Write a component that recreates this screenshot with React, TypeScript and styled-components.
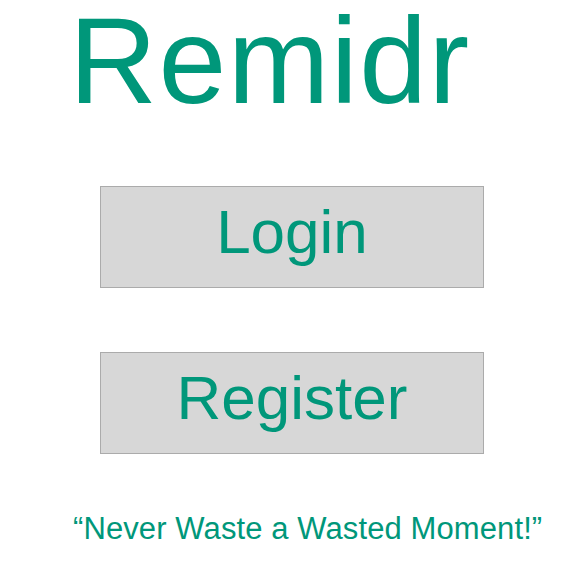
import React from "react";
import styled, { createGlobalStyle } from "styled-components";

const GREEN = "#00977a";

const Global = createGlobalStyle`
  html, body { margin: 0; padding: 0; background: #ffffff; }
  body { font-family: "Liberation Sans", Arial, sans-serif; }
`;

const Page = styled.main`
  display: flex;
  flex-direction: column;
  align-items: flex-start;
  width: 569px;
  min-height: 565px;
`;

const Title = styled.h1`
  margin: 0 0 0 69px;
  font-size: 122px;
  line-height: 122px;
  letter-spacing: 1.4px;
  font-weight: 400;
  color: ${GREEN};
`;

const Actions = styled.div`
  display: flex;
  flex-direction: column;
  gap: 64px;
  margin: 64px 0 0 100px;
`;

const ActionButton = styled.button`
  box-sizing: border-box;
  display: flex;
  justify-content: center;
  align-items: flex-start;
  width: 384px;
  height: 102px;
  margin: 0;
  padding: 14px 0 0;
  background: #d7d7d7;
  border: 1px solid #ababab;
  border-radius: 0;
  font-family: "Liberation Sans", Arial, sans-serif;
  font-size: 62px;
  line-height: 62px;
  font-weight: 400;
  color: ${GREEN};
  cursor: pointer;
`;

const Tagline = styled.p`
  margin: 59px 0 0 73px;
  font-size: 31px;
  line-height: 31px;
  letter-spacing: 0.1px;
  color: ${GREEN};
`;

export default function App() {
  return (
    <>
      <Global />
      <Page>
        <Title>Remidr</Title>
        <Actions>
          <ActionButton>Login</ActionButton>
          <ActionButton>Register</ActionButton>
        </Actions>
        <Tagline>“Never Waste a Wasted Moment!”</Tagline>
      </Page>
    </>
  );
}
